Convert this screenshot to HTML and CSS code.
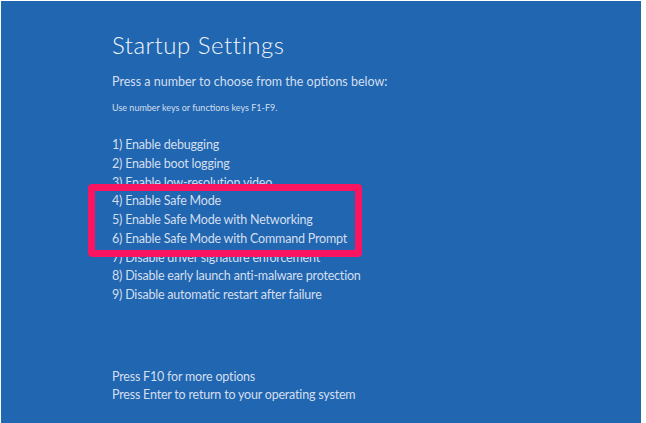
FILE: index.html
```html
<!DOCTYPE html>
<html lang="en">
<head>
  <meta charset="UTF-8">
  <title>Startup Settings</title>
  <link rel="stylesheet" href="styles.css">
</head>
<body>

  <div class="screen">
    <h1>Startup Settings</h1>
    <p class="lead">Press a number to choose from the options below:</p>
    <p class="note">Use number keys or functions keys F1-F9.</p>

    <!-- Options list, 4-6 are marked -->
    <div class="options">
      <div class="option">1) Enable debugging</div>
      <div class="option">2) Enable boot logging</div>
      <div class="option">3) Enable low-resolution video</div>
      <div class="marked">
        <div class="option">4) Enable Safe Mode</div>
        <div class="option">5) Enable Safe Mode with Networking</div>
        <div class="option">6) Enable Safe Mode with Command Prompt</div>
      </div>
      <div class="option">7) Disable driver signature enforcement</div>
      <div class="option">8) Disable early launch anti-malware protection</div>
      <div class="option">9) Disable automatic restart after failure</div>
    </div>

    <div class="footer">
      <div class="option">Press F10 for more options</div>
      <div class="option">Press Enter to return to your operating system</div>
    </div>
  </div>

</body>
</html>
```

FILE: styles.css
```css
body {
  margin: 0;
  background-color: #fff;
  font-family: Lato, "Open Sans", sans-serif;
}

.screen {
  display: flex;
  flex-direction: column;
  margin: 1px 5px 0 1px;
  height: 422px;
  box-sizing: border-box;
  padding: 29px 0 18px 111px;
  background-color: #2166b0;
  color: #d3dfef;
}

h1 {
  margin: 0;
  font-size: 24px;
  line-height: 30px;
  font-weight: 300;
  letter-spacing: 0.5px;
  color: #f1f5fa;
}

.lead {
  margin: 13px 0 0;
  font-size: 12.5px;
  line-height: 18px;
}

.note {
  margin: 11px 0 0;
  font-size: 9px;
  line-height: 12px;
}

.options {
  margin-top: 22px;
}

.option {
  font-size: 12.5px;
  line-height: 18.75px;
  letter-spacing: -0.2px;
  white-space: nowrap;
}

.marked {
  position: relative;
}

.marked::after {
  content: "";
  position: absolute;
  top: -8px;
  bottom: -8px;
  left: -24px;
  width: 274px;
  box-sizing: border-box;
  border: 7.5px solid #fb1561;
  border-radius: 4px;
}

.footer {
  margin-top: auto;
}
```
